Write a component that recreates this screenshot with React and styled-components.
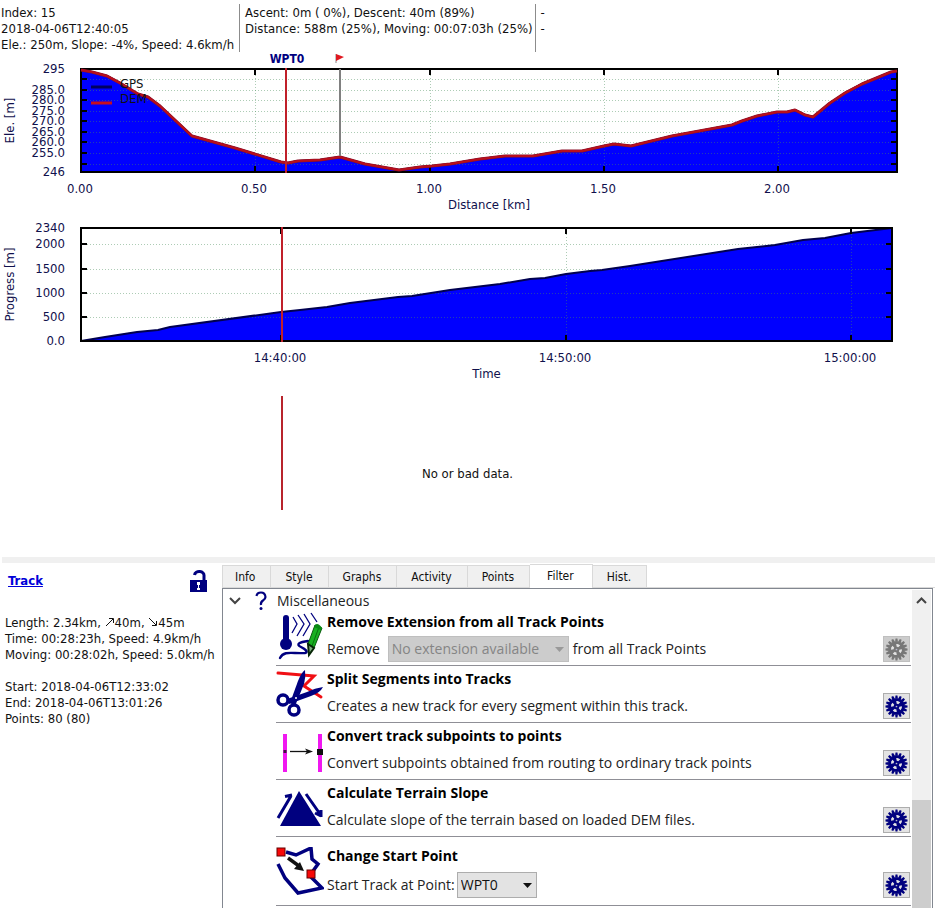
import React, { useLayoutEffect, useRef, useState } from 'react';
import styled, { createGlobalStyle, css } from 'styled-components';

const NAVY = '#00007f';
const COMPACT = '"DejaVu Sans Condensed", "DejaVu Sans", sans-serif';
const BODY = '"Open Sans", "Noto Sans", sans-serif';

const GlobalStyle = createGlobalStyle`
  * { box-sizing: border-box; }
  body { margin: 0; background: #fff; color: #111; font: 13px/16px ${COMPACT}; }
`;

const Page = styled.main`
  display: flex;
  flex-direction: column;
  height: 100vh;
  overflow: hidden;
`;

/* ---------- status header ---------- */

const StatusBar = styled.header`
  display: flex;
  flex: none;
  height: 52px;
  padding-top: 4px;
`;

const StatusCell = styled.div`
  padding: 1px ${(p) => (p.$first ? 5 : 2)}px 0 ${(p) => (p.$first ? 1 : 5)}px;
  white-space: pre;
  & + & { border-left: 1px solid #8c8c8c; }
`;

/* ---------- charts ---------- */

const ChartBox = styled.section`
  flex: none;
  height: ${(p) => p.$height}px;
`;

const ChartSvg = styled.svg`
  display: block;
  width: 100%;
  height: 100%;
  text { font: 13px ${COMPACT}; fill: #10104c; }
  text.plain { fill: #111; }
  text.waypoint { font-size: 12px; font-weight: 700; fill: ${NAVY}; }
`;

const PLOT_LEFT = 81;

function useWidth() {
  const ref = useRef(null);
  const [width, setWidth] = useState(935);
  useLayoutEffect(() => {
    const measure = () => setWidth(ref.current.clientWidth);
    measure();
    window.addEventListener('resize', measure);
    return () => window.removeEventListener('resize', measure);
  }, []);
  return [ref, width];
}

function Label({ x, y, anchor = 'middle', className, children }) {
  return (
    <text x={x} y={y + 4} textAnchor={anchor} className={className}>
      {children}
    </text>
  );
}

function Chart({ name, height, padRight, top, bottom, points, yTicks, yLabels, xTicks, xTitle, yTitle, lineColor, marker, children }) {
  const [ref, width] = useWidth();
  const right = width - padRight;
  const toX = (f) => Math.round(PLOT_LEFT + f * (right - PLOT_LEFT));
  const line = points.map(([f, y]) => `${toX(f)},${y}`).join(' ');
  const mid = (PLOT_LEFT + right) / 2;
  return (
    <ChartBox ref={ref} $height={height}>
      <ChartSvg role="img" aria-label={name}>
        <polygon points={`${PLOT_LEFT},${bottom} ${line} ${right},${bottom}`} fill="#00f" />
        <g strokeDasharray="1 2" stroke="#4a8f5a" strokeOpacity="0.45">
          {yTicks.map((y) => <path key={y} d={`M${PLOT_LEFT} ${y + 0.5}H${right}`} />)}
          {xTicks.filter((t) => t.f > 0).map((t) => <path key={t.label} d={`M${toX(t.f) + 0.5} ${top}V${bottom}`} />)}
        </g>
        <polyline points={line} fill="none" stroke="#000050" strokeWidth="2" strokeLinejoin="round" />
        <g stroke="#000" strokeWidth="2">
          {yTicks.map((y) => <path key={y} d={`M${PLOT_LEFT} ${y}h6M${right} ${y}h-6`} />)}
          {xTicks.filter((t) => t.f > 0).map((t) => <path key={t.label} d={`M${toX(t.f)} ${top}v6M${toX(t.f)} ${bottom}v-6`} />)}
          <rect x={PLOT_LEFT} y={top} width={right - PLOT_LEFT} height={bottom - top} fill="none" />
        </g>
        {lineColor && (
          <g fill="none" strokeLinejoin="round">
            <polyline points={line} stroke="#8a1028" strokeWidth="3" />
            <polyline points={line} stroke={lineColor} strokeWidth="2" />
          </g>
        )}
        {yLabels.map((l) => <Label key={l.label} x={65} y={l.y} anchor="end">{l.label}</Label>)}
        {xTicks.map((t) => <Label key={t.label} x={toX(t.f) - 1} y={bottom + 17}>{t.label}</Label>)}
        <Label x={mid} y={bottom + 33}>{xTitle}</Label>
        <text transform={`translate(14 ${(top + bottom) / 2}) rotate(-90)`} textAnchor="middle">{yTitle}</text>
        {children && children(toX)}
        <path d={`M${toX(marker)} ${top - 1}V${bottom + 1}`} stroke="#c0202a" strokeWidth="2" />
      </ChartSvg>
    </ChartBox>
  );
}

const frac = (right) => ([x, y]) => [(x - PLOT_LEFT) / (right - PLOT_LEFT), y];

const ELEVATION = [
  [81, 18], [92, 20], [107, 24], [120, 31], [138, 42], [148, 45], [160, 54], [192, 84], [235, 96], [281, 110],
  [288, 111], [298, 109], [320, 108], [340, 105], [365, 112], [399, 118], [420, 115], [432, 114], [450, 112],
  [480, 107], [505, 104], [533, 104], [562, 99], [582, 99], [604, 94], [614, 92], [631, 94], [672, 84],
  [732, 73], [742, 69], [757, 64], [777, 60], [787, 60], [795, 58], [805, 63], [813, 65], [830, 51], [845, 41],
  [862, 32], [891, 20], [897, 19],
].map(frac(897));

const PROGRESS = [
  [81, 126], [105, 122], [137, 117], [158, 115], [170, 112], [281, 97], [300, 95], [327, 92], [350, 88], [398, 82],
  [412, 81], [450, 75], [500, 69], [530, 64], [545, 63], [566, 59], [590, 56], [602, 55], [630, 51], [738, 34],
  [775, 30], [803, 25], [825, 23], [851, 18], [892, 13],
].map(frac(892));

const ELE_LABELS = [
  ['295', 17], ['285.0', 38], ['280.0', 48], ['275.0', 59], ['270.0', 69], ['265.0', 80], ['260.0', 90], ['255.0', 101], ['246', 120],
].map(([label, y]) => ({ label, y }));

const PROGRESS_LABELS = [
  ['2340', 13], ['2000', 29], ['1500', 54], ['1000', 78], ['500', 102], ['0.0', 126],
].map(([label, y]) => ({ label, y }));

function ElevationChart() {
  return (
    <Chart
      name="Elevation over distance" height={163} padRight={38} top={17} bottom={120}
      points={ELEVATION} lineColor="#b80f1c" marker={205 / 816}
      yTicks={[27, 38, 48, 59, 69, 80, 90, 101, 112]} yLabels={ELE_LABELS}
      xTicks={[['0.00', 0], ['0.50', 174], ['1.00', 349], ['1.50', 523], ['2.00', 697]].map(([label, n]) => ({ label, f: n / 816 }))}
      xTitle="Distance [km]" yTitle="Ele. [m]"
    >
      {(toX) => {
        const flag = toX(259 / 816);
        return (
          <>
            <path d="M91 35h21" stroke="#000060" strokeWidth="3" />
            <path d="M91 51h21" stroke="#c80f1c" strokeWidth="3" />
            <Label x={120} y={32} anchor="start" className="plain">GPS</Label>
            <Label x={120} y={47} anchor="start" className="plain">DEM</Label>
            <Label x={toX(205 / 816) + 1} y={7} className="waypoint">WPT0</Label>
            <path d={`M${flag} 17V104`} stroke="#808080" strokeWidth="2" />
            <path d={`M${flag - 4} 2v9`} stroke="#888" />
            <path d={`M${flag - 4} 2l8 3l-8 4z`} fill="#e01820" />
          </>
        );
      }}
    </Chart>
  );
}

function ProgressChart() {
  return (
    <Chart
      name="Progress over time" height={170} padRight={43} top={13} bottom={126}
      points={PROGRESS} marker={201 / 811}
      yTicks={[29, 54, 78, 102]} yLabels={PROGRESS_LABELS}
      xTicks={[['14:40:00', 200], ['14:50:00', 485], ['15:00:00', 770]].map(([label, n]) => ({ label, f: n / 811 }))}
      xTitle="Time" yTitle="Progress [m]"
    />
  );
}

function EmptyChart() {
  const [ref, width] = useWidth();
  const x = Math.round(PLOT_LEFT + (201 / 811) * (width - 43 - PLOT_LEFT));
  return (
    <ChartBox ref={ref} $height={172}>
      <ChartSvg role="img" aria-label="No or bad data">
        <path d={`M${x} 11V125`} stroke="#b8242c" strokeWidth="2" />
        <Label x={width / 2} y={89} className="plain">No or bad data.</Label>
      </ChartSvg>
    </ChartBox>
  );
}

/* ---------- lower area ---------- */

const Splitter = styled.div`
  flex: none;
  height: 6px;
  margin-left: 2px;
  background: #f0f0f0;
`;

const Lower = styled.div`
  display: flex;
  flex: 1;
  min-height: 0;
`;

const TrackPanel = styled.aside`
  flex: none;
  width: 222px;
  padding: 5px 4px 0 5px;
`;

const TrackHead = styled.div`
  display: flex;
  align-items: center;
  justify-content: space-between;
  height: 26px;
  margin-bottom: 21px;
  padding: 0 10px 0 3px;
`;

const TrackLink = styled.a`
  color: #0000d8;
  font: 700 13px/16px ${COMPACT};
  text-decoration: underline;
`;

const IconButton = styled.button`
  display: flex;
  padding: 0;
  border: 0;
  background: none;
`;

const Facts = styled.p`
  margin: 0 0 16px;
  white-space: nowrap;
`;

const Slope = styled.svg`
  width: 10px;
  height: 10px;
`;

const Main = styled.section`
  display: flex;
  flex: 1;
  flex-direction: column;
  min-width: 0;
`;

const TabBar = styled.div`
  display: flex;
  flex: none;
  align-items: flex-end;
  height: 25px;
  border-bottom: 1px solid #d9d9d9;
`;

const Tab = styled.button`
  height: 22px;
  padding: 0 15px 0 14px;
  border: 1px solid #d9d9d9;
  border-left-width: 0;
  border-bottom: 0;
  background: #f0f0f0;
  color: #111;
  font: 12px/20px ${COMPACT};
  &:first-child { border-left-width: 1px; padding-left: 12px; }
  ${(p) => p.$active && css`
    height: 24px;
    margin-bottom: -1px;
    padding: 0 18px 2px 17px;
    background: #fff;
  `}
`;

const Panel = styled.div`
  display: flex;
  flex: 1;
  min-height: 0;
  margin-right: 2px;
  padding: 1px 1px 0 0;
  border: solid #828790;
  border-width: 1px 1px 0;
`;

const Tree = styled.div`
  flex: 1;
  min-width: 0;
  padding-right: 1px;
  overflow: hidden;
  color: #222;
  font: 14px/20px ${BODY};
`;

const GroupHead = styled.div`
  display: flex;
  align-items: center;
  height: 21px;
  padding-left: 6px;
`;

const GroupMark = styled.svg`
  margin: 0 6px 0 14px;
`;

const GroupTitle = styled.span`
  padding-left: 4px;
`;

const Filters = styled.div`
  margin: -2px 0 0 53px;
`;

const FilterRow = styled.article`
  display: flex;
  align-items: flex-end;
  padding: ${(p) => (p.$tall ? '7px 1px 7px 0' : '1px 1px 3px 0')};
  border-bottom: 1px solid #8f8f96;
`;

const FilterIcon = styled.svg`
  flex: none;
  align-self: center;
  width: 48px;
  height: 48px;
  margin-right: 3px;
`;

const FilterText = styled.div`
  display: flex;
  flex: 1;
  flex-direction: column;
  gap: ${(p) => (p.$tall ? 4 : 2)}px;
  min-width: 0;
`;

const FilterTitle = styled.h3`
  margin: 0;
  color: #000;
  font: 700 14px/24px ${BODY};
`;

const FilterLine = styled.label`
  display: flex;
  align-items: center;
  height: 26px;
  white-space: nowrap;
`;

const SelectWrap = styled.span`
  display: grid;
  align-items: center;
  width: ${(p) => p.$width}px;
  margin: 0 4px 0 ${(p) => p.$gap}px;
  > * { grid-area: 1 / 1; }
  > svg { justify-self: end; margin-right: 5px; pointer-events: none; }
`;

const Select = styled.select`
  width: 100%;
  height: 26px;
  padding: 0 3px;
  border: 1px solid #adadad;
  border-radius: 0;
  background: #e3e3e3;
  color: #111;
  font: 14px/22px ${BODY};
  appearance: none;
  &:disabled { border-color: #bfbfbf; background: #ccc; color: #858585; opacity: 1; }
`;

const GearButton = styled.button`
  display: flex;
  flex: none;
  align-items: center;
  justify-content: center;
  width: 27px;
  height: 26px;
  padding: 0;
  border: 1px solid #adadad;
  background: #e3e3e3;
  color: ${NAVY};
  &:disabled { border-color: #bfbfbf; background: #ccc; color: #777; }
`;

const Scroll = styled.div`
  display: flex;
  flex: none;
  flex-direction: column;
  width: 19px;
  background: #f0f0f0;
`;

const ScrollUp = styled.button`
  display: flex;
  align-items: center;
  justify-content: center;
  height: 20px;
  padding: 0;
  border: 0;
  background: none;
`;

const ScrollGap = styled.div`
  flex: 190;
`;

const ScrollThumb = styled.div`
  flex: 108;
  background: #cdcdcd;
`;

/* ---------- icons ---------- */

const GEAR_TEETH = Array.from({ length: 16 }, (_, i) => i * 22.5);
const GEAR_HOLES = [20, 110, 200, 290];

function Gear() {
  return (
    <svg width="23" height="23" viewBox="-12 -12 24 24" aria-hidden="true">
      <g fill="currentColor">
        {GEAR_TEETH.map((a) => <path key={a} d="M-1.500-8L-1-11.500H1L1.500-8z" transform={`rotate(${a})`} />)}
        <circle r="8.700" />
      </g>
      {GEAR_HOLES.map((a) => <path key={a} d="M-2.200-5.200Q0-6.600 2.200-5.200L0.800-2.800Q0-3.300-0.800-2.800z" fill="#e3e3e3" transform={`rotate(${a})`} />)}
      <circle r="0.900" fill="#b8b8cc" />
    </svg>
  );
}

function Lock() {
  return (
    <svg width="19" height="22" viewBox="0 0 19 22" aria-hidden="true">
      <path d="M5.500 5A4.500 3.700 0 0 1 15 6V11" fill="none" stroke={NAVY} strokeWidth="3" />
      <rect x="1" y="10" width="17" height="12" fill={NAVY} />
      <path d="M8 12h3v3h-1v3h1v2H8v-2h1v-3H8z" fill="#fff" />
    </svg>
  );
}

function ThermometerIcon() {
  return (
    <FilterIcon viewBox="0 0 48 48" aria-hidden="true">
      <g fill="none" stroke={NAVY}>
        <path d="M10 6V30" strokeWidth="6" strokeLinecap="round" />
        <path d="M17 5l4 7-5 9M22 3l6 9-7 12M28 2l6 10-7 12M35 1l6 9" strokeWidth="1.300" />
        <path d="M4 46C8 38 17 42 29 41C33 40 29 37 25 35C19 32 24 30 32 29" strokeWidth="2.400" strokeLinecap="round" />
      </g>
      <circle cx="10" cy="32" r="6" fill={NAVY} />
      <path d="M39 13l7 3-8 20-6-4z" fill="#18b020" stroke="#075a0c" />
      <path d="M43 15l-7 19" stroke="#08700f" />
      <path d="M39 13q3-3 7 3l-1 2-7-3z" fill="#0a8a14" />
      <path d="M32 32l6 4-5 7z" fill="#7fae7f" stroke="#052505" strokeWidth="2" />
    </FilterIcon>
  );
}

function ScissorsIcon() {
  return (
    <FilterIcon viewBox="0 0 48 48" aria-hidden="true">
      <path d="M2 4L38 7L28 17L45 28" fill="none" stroke="#f00f14" strokeWidth="3" strokeLinecap="round" />
      <path d="M29 1Q25 4 22 12L14 34l5 3L28 15Q30 8 29 1z" fill={NAVY} />
      <path d="M47 18Q39 19 31 23L11 30l2 5L35 27Q44 24 47 18z" fill={NAVY} />
      <circle cx="7" cy="31" r="5" fill="none" stroke={NAVY} strokeWidth="3.500" />
      <circle cx="18" cy="41" r="5" fill="none" stroke={NAVY} strokeWidth="3.500" />
      <circle cx="20" cy="29" r="1" fill="#fff" />
    </FilterIcon>
  );
}

function SubpointsIcon() {
  return (
    <FilterIcon viewBox="0 0 48 48" aria-hidden="true">
      <path d="M9 8V46M44 8V46" stroke="#f018f0" strokeWidth="4" />
      <rect x="7.500" y="24" width="3" height="3" fill="#401040" />
      <rect x="41" y="23" width="6" height="6" fill="#101010" />
      <path d="M14 25.500H33" stroke="#111" strokeWidth="1.300" />
      <path d="M37 25.500l-8-3 2 3-2 3z" fill="#111" />
    </FilterIcon>
  );
}

function SlopeIcon() {
  return (
    <FilterIcon viewBox="0 0 48 48" aria-hidden="true">
      <path d="M23 8L45 43H4z" fill={NAVY} />
      <path d="M2 35L15 13M9 13.500L16 12M30 11L44 31M45 34V27M45 33L39 30" fill="none" stroke={NAVY} strokeWidth="3" />
    </FilterIcon>
  );
}

function StartPointIcon() {
  return (
    <FilterIcon viewBox="0 0 48 48" aria-hidden="true">
      <path d="M10 5L20 8L35 1L36 12L42 17L37 24L35 30L46 41L22 46L9 31L2 17" fill="none" stroke={NAVY} strokeWidth="3.500" />
      <path d="M12 11L23 19" stroke="#111" strokeWidth="3.500" />
      <path d="M28 24L18 22L24 15z" fill="#111" />
      <rect x="1" y="1" width="8" height="8" fill="#f80808" stroke="#600" />
      <rect x="31" y="23" width="8" height="8" fill="#f80808" stroke="#600" />
    </FilterIcon>
  );
}

function Caret({ color }) {
  return (
    <svg width="9" height="5" viewBox="0 0 9 5" aria-hidden="true">
      <path d="M0 0h9L4.500 5z" fill={color} />
    </svg>
  );
}

function Filter({ icon, title, tall, disabled, children }) {
  return (
    <FilterRow $tall={tall}>
      {icon}
      <FilterText $tall={tall}>
        <FilterTitle>{title}</FilterTitle>
        {children}
      </FilterText>
      <GearButton disabled={disabled} aria-label={`Apply: ${title}`}>
        <Gear />
      </GearButton>
    </FilterRow>
  );
}

const TABS = ['Info', 'Style', 'Graphs', 'Activity', 'Points', 'Filter', 'Hist.'];

export default function App() {
  const [active, setActive] = useState('Filter');
  return (
    <Page>
      <GlobalStyle />
      <StatusBar>
        <StatusCell $first>{'Index: 15\n2018-04-06T12:40:05\nEle.: 250m, Slope: -4%, Speed: 4.6km/h'}</StatusCell>
        <StatusCell>{'Ascent: 0m ( 0%), Descent: 40m (89%)\nDistance: 588m (25%), Moving: 00:07:03h (25%)'}</StatusCell>
        <StatusCell>{'-\n-'}</StatusCell>
      </StatusBar>

      <ElevationChart />
      <ProgressChart />
      <EmptyChart />

      <Splitter />

      <Lower>
        <TrackPanel>
          <TrackHead>
            <TrackLink href="#track">Track</TrackLink>
            <IconButton aria-label="Unlocked"><Lock /></IconButton>
          </TrackHead>
          <Facts>
            Length: 2.34km,{' '}
            <Slope viewBox="0 0 10 10" aria-label="ascent"><path d="M1 9L8 2M4 1.500H8.500V6" fill="none" stroke="#111" /></Slope>
            40m,{' '}
            <Slope viewBox="0 0 10 10" aria-label="descent"><path d="M1 1L8 8M4 8.500H8.500V4" fill="none" stroke="#111" /></Slope>
            45m
            <br />Time: 00:28:23h, Speed: 4.9km/h
            <br />Moving: 00:28:02h, Speed: 5.0km/h
          </Facts>
          <Facts>
            Start: 2018-04-06T12:33:02
            <br />End: 2018-04-06T13:01:26
            <br />Points: 80 (80)
          </Facts>
        </TrackPanel>

        <Main>
          <TabBar role="tablist">
            {TABS.map((t) => (
              <Tab key={t} role="tab" aria-selected={t === active} $active={t === active} onClick={() => setActive(t)}>
                {t}
              </Tab>
            ))}
          </TabBar>
          <Panel>
            <Tree>
              <GroupHead>
                <IconButton aria-label="Collapse Miscellaneous">
                  <svg width="12" height="8" viewBox="0 0 12 8"><path d="M1 1l5 5 5-5" fill="none" stroke="#444" strokeWidth="2" /></svg>
                </IconButton>
                <GroupMark width="12" height="20" viewBox="0 0 12 20" aria-hidden="true">
                  <path d="M1.500 5Q2 1.500 6 1.500T10.500 6Q10.500 8 8 9.500T6 14" fill="none" stroke={NAVY} strokeWidth="2.200" />
                  <circle cx="6" cy="17.500" r="1.500" fill={NAVY} />
                </GroupMark>
                <GroupTitle>Miscellaneous</GroupTitle>
              </GroupHead>
              <Filters>
                <Filter icon={<ThermometerIcon />} title="Remove Extension from all Track Points" disabled>
                  <FilterLine>
                    Remove
                    <SelectWrap $width={181} $gap={8}>
                      <Select disabled aria-label="Extension"><option>No extension available</option></Select>
                      <Caret color="#999" />
                    </SelectWrap>
                    from all Track Points
                  </FilterLine>
                </Filter>
                <Filter icon={<ScissorsIcon />} title="Split Segments into Tracks">
                  <FilterLine as="div">Creates a new track for every segment within this track.</FilterLine>
                </Filter>
                <Filter icon={<SubpointsIcon />} title="Convert track subpoints to points">
                  <FilterLine as="div">Convert subpoints obtained from routing to ordinary track points</FilterLine>
                </Filter>
                <Filter icon={<SlopeIcon />} title="Calculate Terrain Slope">
                  <FilterLine as="div">Calculate slope of the terrain based on loaded DEM files.</FilterLine>
                </Filter>
                <Filter icon={<StartPointIcon />} title="Change Start Point" tall>
                  <FilterLine>
                    Start Track at Point:
                    <SelectWrap $width={80} $gap={2}>
                      <Select><option>WPT0</option></Select>
                      <Caret color="#111" />
                    </SelectWrap>
                  </FilterLine>
                </Filter>
              </Filters>
            </Tree>
            <Scroll>
              <ScrollUp aria-label="Scroll up">
                <svg width="11" height="7" viewBox="0 0 11 7"><path d="M1 6l4.500-4.500L10 6" fill="none" stroke="#444" strokeWidth="2" /></svg>
              </ScrollUp>
              <ScrollGap />
              <ScrollThumb />
            </Scroll>
          </Panel>
        </Main>
      </Lower>
    </Page>
  );
}
